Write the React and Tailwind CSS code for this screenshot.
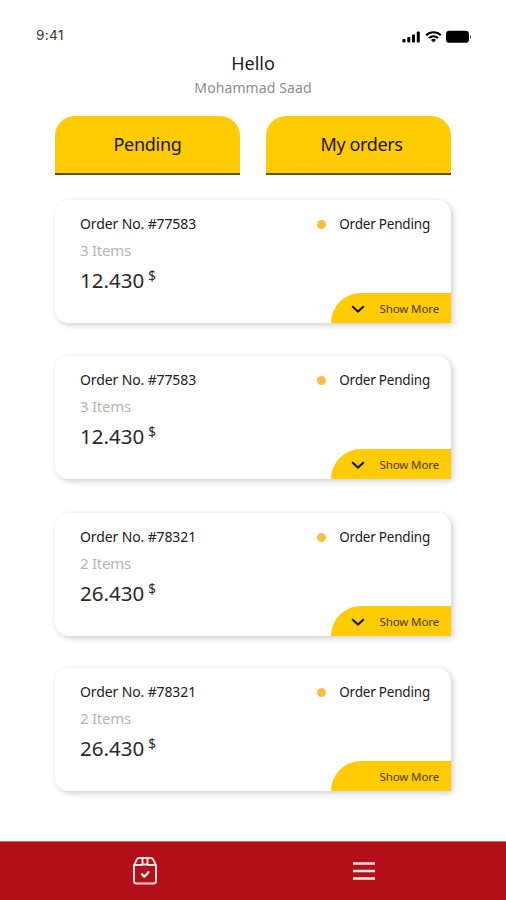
import React from "react";

const orders = [
  { id: 1, number: "#77583", items: 3, price: "12.430", arrow: true, height: "h-[156px]" },
  { id: 2, number: "#77583", items: 3, price: "12.430", arrow: true, height: "h-[157px]" },
  { id: 3, number: "#78321", items: 2, price: "26.430", arrow: true, height: "h-[155px]" },
  { id: 4, number: "#78321", items: 2, price: "26.430", arrow: false, height: "h-[123px]" },
];

const StatusBar = () => (
  <div className="h-[52px] pt-[27px] pl-[36px] pr-[34px] flex justify-between">
    <span className="font-['Inter',sans-serif] text-[13.5px] leading-4 tracking-[0.4px] text-[#333]">
      9:41
    </span>
    <div className="flex gap-1 pt-[3px] text-black">
      <svg width="19" height="13" viewBox="0 0 19 13" fill="currentColor">
        <rect x="0.5" y="9" width="3" height="3.5" rx="0.8" />
        <rect x="5.3" y="7" width="3" height="5.5" rx="0.8" />
        <rect x="10" y="4.5" width="3" height="8" rx="0.8" />
        <rect x="14.8" y="1.5" width="3" height="11" rx="0.8" />
      </svg>
      <svg width="17" height="13" viewBox="0 0 17 13" fill="none" stroke="currentColor" strokeWidth="2">
        <path d="M1.2 5.2a10.4 10.4 0 0 1 14.6 0" />
        <path d="M4 8.1a6.4 6.4 0 0 1 9 0" />
        <path d="M8.5 12.4 6 9.9a3.6 3.6 0 0 1 5 0z" fill="currentColor" stroke="none" />
      </svg>
      <svg width="26" height="13" viewBox="0 0 26 13" fill="currentColor">
        <rect x="0" y="0.8" width="23" height="12" rx="3.4" />
        <path d="M24 5v4.2c1.6-.7 1.6-3.5 0-4.2z" opacity="0.6" />
      </svg>
    </div>
  </div>
);

const OrderCard = ({ order }) => (
  <div className={order.height}>
    <div className="h-[123px] flex flex-col justify-between bg-white rounded-tl-[14px] rounded-tr-[14px] rounded-bl-[14px] shadow-[2px_2px_6px_rgba(0,0,0,0.2)]">
      <div className="pt-[14px] pl-[25px] pr-[21px] flex justify-between">
        <div>
          <p className="text-[14px] leading-5 tracking-[-0.12px] whitespace-nowrap text-[#202020]">
            Order No. {order.number}
          </p>
          <p className="mt-1.5 text-[15px] leading-5 tracking-[-0.25px] text-[#b5b5b5]">
            {order.items} Items
          </p>
        </div>
        <div className="h-5 flex items-center gap-[13px]">
          <span className="w-[9px] h-[9px] rounded-full bg-[#fbbf3f]" />
          <span className="text-[13.5px] leading-5 tracking-[-0.2px] whitespace-nowrap text-[#202020]">
            Order Pending
          </span>
        </div>
      </div>
      <div className="pl-[25px] flex justify-between items-end">
        <p className="h-[57px] flex items-start text-[#2a2a2a]">
          <span className="text-[20.5px] leading-7">{order.price}</span>
          <span className="ml-[4px] text-[13.5px] leading-5">$</span>
        </p>
        <button className="w-[120px] h-[30px] pl-5 pr-[12px] pt-0.5 flex items-center justify-between bg-[#ffcb05] rounded-tl-[30px]">
          <svg width="14" height="8" viewBox="0 0 14 8" fill="none" stroke="#151515" strokeWidth="2">
            {order.arrow && <path d="M1.2 1.2 7 6.6l5.8-5.4" />}
          </svg>
          <span className="text-[11.5px] leading-4 tracking-[-0.13px] whitespace-nowrap text-[#46390a]">
            Show More
          </span>
        </button>
      </div>
    </div>
  </div>
);

const App = () => {
  return (
    <div className="w-full h-[900px] flex flex-col bg-white overflow-hidden font-['Noto_Sans',sans-serif]">
      <StatusBar />
      <div className="text-center">
        <h1 className="text-[18px] leading-[22px] text-[#202020]">Hello</h1>
        <p className="mt-1 text-[14px] leading-5 tracking-[0.1px] text-[#8d8d8d]">
          Mohammad Saad
        </p>
      </div>

      <div className="mt-[18px] ml-[55px] flex gap-[26px]">
        <button className="w-[185px] h-[59px] rounded-t-[20px] bg-[#ffcb05] border-b-2 border-[#62511c] text-[18px] tracking-[-0.3px] text-[#18150a]">
          Pending
        </button>
        <button className="w-[185px] h-[59px] pl-1.5 rounded-t-[20px] bg-[#ffcb05] border-b-2 border-[#62511c] text-[18px] tracking-[-0.4px] text-[#18150a]">
          My orders
        </button>
      </div>

      <div className="mt-[25px] ml-[55px] w-[396px]">
        {orders.map((order) => (
          <OrderCard key={order.id} order={order} />
        ))}
      </div>

      <div className="mt-auto h-[59px] pl-[132px] pr-[130px] flex items-center justify-between bg-[#b20f19] border-t border-[#d06a6d]">
        <svg width="26" height="30" viewBox="0 0 26 30" fill="none" stroke="#ffe3e0" strokeWidth="1.9" strokeLinejoin="round" strokeLinecap="round">
          <path d="M2 9.5 5 3.2Q5.6 2 7 2h12q1.4 0 2 1.2L24 9.5V25q0 2.500-2.500 2.500h-17Q2 27.500 2 25z" />
          <path d="M2.300 9h7.700M16 9h7.700M10.500 2.300V8.500h5V2.300" />
          <path d="m10 18.300 2.300 2.400 4.200-4.500" strokeWidth="2.400" />
        </svg>
        <svg width="24" height="20" viewBox="0 0 24 20" stroke="#ffe8e6" strokeWidth="2.300">
          <path d="M1 2.500h22M1 10h22M1 17.500h22" />
        </svg>
      </div>
    </div>
  );
};

export default App;
